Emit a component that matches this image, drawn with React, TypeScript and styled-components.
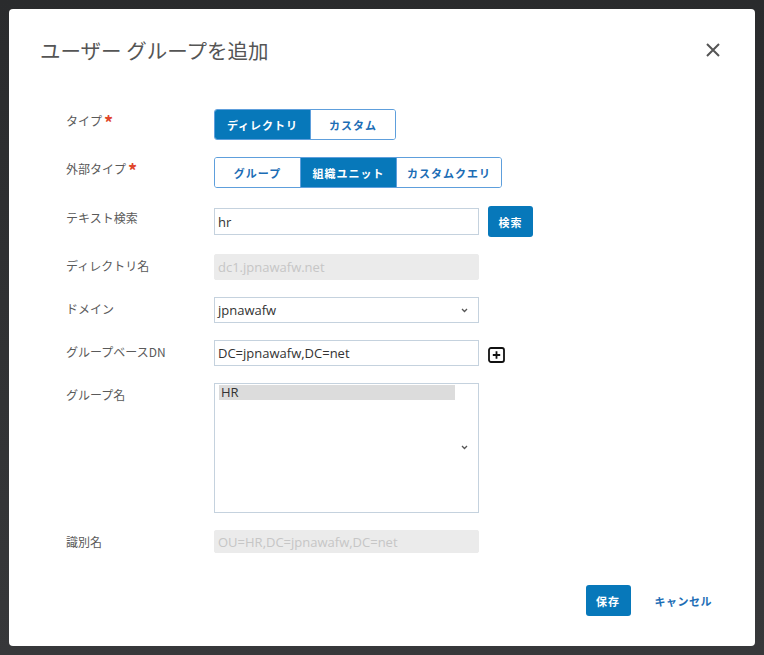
import styled, { createGlobalStyle } from "styled-components";

const GlobalStyle = createGlobalStyle`
    html, body {
        margin: 0;
        padding: 0;
        background: #2f3032;
    }
    body {
        font-family: "Open Sans", "Noto Sans CJK JP", sans-serif;
    }
`;

const Backdrop = styled.div`
    width: 764px;
    height: 655px;
    box-sizing: border-box;
    padding: 9px 9px 9px 9px;
    background: linear-gradient(#2a2b2d, #37383a);
`;

const Modal = styled.div`
    width: 746px;
    height: 637px;
    background: #fff;
    border-radius: 4px;
    box-sizing: border-box;
    display: flex;
    flex-direction: column;
`;

const Header = styled.div`
    display: flex;
    justify-content: space-between;
    align-items: center;
    padding: 26px 34px 0 31px;
    height: 30px;
`;

const Title = styled.h2`
    margin: 0;
    font-family: "Noto Sans CJK JP", sans-serif;
    font-size: 20.5px;
    font-weight: 400;
    color: #555;
`;

const CloseButton = styled.button`
    border: none;
    background: none;
    padding: 0;
    width: 16px;
    height: 16px;
    cursor: pointer;
    display: flex;
`;

const Form = styled.div`
    display: flex;
    flex-direction: column;
    gap: 17px;
    padding: 44px 0 0 57px;
`;

const Row = styled.div<{ $pushed?: boolean }>`
    display: flex;
    align-items: flex-start;
    margin-top: ${(p) => (p.$pushed ? "1px" : "0")};
`;

const Label = styled.div`
    width: 148px;
    flex-shrink: 0;
    font-family: "Noto Sans CJK JP", sans-serif;
    font-size: 12px;
    line-height: 22px;
    padding-top: 1px;
    color: #5a5a5a;
`;

const Required = styled.span`
    color: #e0452b;
    font-size: 18px;
    line-height: 14px;
    font-weight: 700;
    margin-left: 2px;
    vertical-align: -4px;
`;

const Controls = styled.div`
    display: flex;
    align-items: center;
    gap: 9px;
    min-height: ${(p: { tall?: boolean }) => (p.tall ? "31px" : "auto")};
`;

const ToggleGroup = styled.div`
    display: inline-flex;
    height: 31px;
    box-sizing: border-box;
    border: 1px solid #5e9fdc;
    border-radius: 3px;
    overflow: hidden;
`;

const ToggleButton = styled.button<{ $active?: boolean; $w: number }>`
    width: ${(p) => p.$w}px;
    border: none;
    border-left: 1px solid #5e9fdc;
    &:first-child {
        border-left: none;
    }
    background: ${(p) => (p.$active ? "#0778ba" : "#fff")};
    color: ${(p) => (p.$active ? "#fff" : "#1c6db5")};
    font-family: "Noto Sans CJK JP", sans-serif;
    font-size: 11px;
    font-weight: 700;
    letter-spacing: 1px;
    padding: 0;
    cursor: pointer;
`;

const TextBox = styled.div<{ $disabled?: boolean; $h?: number }>`
    width: 265px;
    height: ${(p) => p.$h ?? 27}px;
    box-sizing: border-box;
    border: 1px solid ${(p) => (p.$disabled ? "#ebebeb" : "#c5d2de")};
    border-radius: ${(p) => (p.$disabled ? "2px" : "0")};
    background: ${(p) => (p.$disabled ? "#ebebeb" : "#fff")};
    color: ${(p) => (p.$disabled ? "#c6c6c6" : "#333")};
    font-size: 13px;
    display: flex;
    align-items: center;
    justify-content: space-between;
    padding: 0 10px 0 3px;
`;

const BlueButton = styled.button`
    width: 45px;
    height: 31px;
    border: none;
    border-radius: 3px;
    background: #0778ba;
    color: #fff;
    font-family: "Noto Sans CJK JP", sans-serif;
    font-size: 11px;
    font-weight: 700;
    letter-spacing: 1px;
    padding: 0;
    cursor: pointer;
`;

const ListBox = styled.div`
    width: 265px;
    height: 130px;
    box-sizing: border-box;
    border: 1px solid #c5d2de;
    padding: 1px 0 0 4px;
    display: grid;
    grid-template-columns: 236px 1fr;
`;

const ListItem = styled.div`
    height: 15px;
    background: #dcdcdc;
    font-size: 13px;
    line-height: 15px;
    color: #333;
    padding-left: 2px;
`;

const ListChevron = styled.div`
    align-self: center;
    display: flex;
    justify-content: center;
    padding-right: 4px;
    margin-top: -2px;
`;

const PlusWrap = styled.div`
    display: flex;
    margin-top: 3px;
`;

const Footer = styled.div`
    display: flex;
    justify-content: flex-end;
    align-items: center;
    gap: 24px;
    padding: 32px 43px 0 0;
`;

const LinkButton = styled.button`
    border: none;
    background: none;
    padding: 0;
    color: #1c6db5;
    font-family: "Noto Sans CJK JP", sans-serif;
    font-size: 11px;
    font-weight: 700;
    letter-spacing: 0.5px;
    cursor: pointer;
`;

const Chevron = () => (
    <svg width="7" height="5" viewBox="0 0 7 5">
        <path d="M1 1 L3.5 3.5 L6 1" fill="none" stroke="#555" strokeWidth="1.3" />
    </svg>
);

const PlusIcon = () => (
    <svg width="17" height="16" viewBox="0 0 17 16">
        <rect x="1" y="1" width="15" height="14" rx="2" fill="none" stroke="#111" strokeWidth="1.8" />
        <path d="M8.5 4.2 V11.8 M4.8 8 H12.2" stroke="#111" strokeWidth="1.8" />
    </svg>
);

function App() {
    return (
        <>
            <GlobalStyle />
            <Backdrop>
                <Modal>
                    <Header>
                        <Title>ユーザー グループを追加</Title>
                        <CloseButton>
                            <svg width="16" height="16" viewBox="0 0 16 16">
                                <path d="M2 2 L14 14 M14 2 L2 14" stroke="#555" strokeWidth="2" />
                            </svg>
                        </CloseButton>
                    </Header>

                    <Form>
                        <Row>
                            <Label>
                                タイプ<Required>*</Required>
                            </Label>
                            <ToggleGroup>
                                <ToggleButton $w={95} $active>
                                    ディレクトリ
                                </ToggleButton>
                                <ToggleButton $w={85}>カスタム</ToggleButton>
                            </ToggleGroup>
                        </Row>

                        <Row>
                            <Label>
                                外部タイプ<Required>*</Required>
                            </Label>
                            <ToggleGroup>
                                <ToggleButton $w={85}>グループ</ToggleButton>
                                <ToggleButton $w={96} $active>
                                    組織ユニット
                                </ToggleButton>
                                <ToggleButton $w={105}>カスタムクエリ</ToggleButton>
                            </ToggleGroup>
                        </Row>

                        <Row $pushed>
                            <Label>テキスト検索</Label>
                            <Controls tall>
                                <TextBox>hr</TextBox>
                                <BlueButton>検索</BlueButton>
                            </Controls>
                        </Row>

                        <Row>
                            <Label>ディレクトリ名</Label>
                            <TextBox $disabled $h={26}>
                                dc1.jpnawafw.net
                            </TextBox>
                        </Row>

                        <Row>
                            <Label>ドメイン</Label>
                            <TextBox $h={26}>
                                jpnawafw
                                <Chevron />
                            </TextBox>
                        </Row>

                        <Row>
                            <Label>グループベースDN</Label>
                            <Controls>
                                <TextBox $h={26}>DC=jpnawafw,DC=net</TextBox>
                                <PlusWrap>
                                    <PlusIcon />
                                </PlusWrap>
                            </Controls>
                        </Row>

                        <Row>
                            <Label>グループ名</Label>
                            <ListBox>
                                <ListItem>HR</ListItem>
                                <ListChevron>
                                    <Chevron />
                                </ListChevron>
                            </ListBox>
                        </Row>

                        <Row>
                            <Label>識別名</Label>
                            <TextBox $disabled $h={23}>
                                OU=HR,DC=jpnawafw,DC=net
                            </TextBox>
                        </Row>
                    </Form>

                    <Footer>
                        <BlueButton>保存</BlueButton>
                        <LinkButton>キャンセル</LinkButton>
                    </Footer>
                </Modal>
            </Backdrop>
        </>
    );
}

export default App;
